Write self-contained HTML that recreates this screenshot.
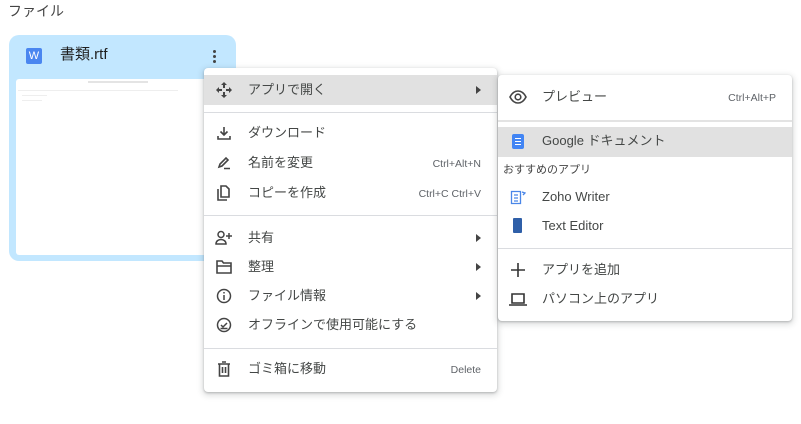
<!DOCTYPE html>
<html><head><meta charset="utf-8"><style>
body{margin:0;width:801px;height:424px;background:#fff;position:relative;overflow:hidden;font-family:"Liberation Sans","Noto Sans CJK JP",sans-serif;color:#3c4043}
.a{position:absolute}
.t{position:absolute;font-size:13px;line-height:16px;white-space:nowrap;color:#444746}
.s{position:absolute;font-size:10.5px;line-height:14px;color:#5f6368;white-space:nowrap;text-align:right}
.menu{position:absolute;background:#fff;border-radius:4px;box-shadow:0 2px 6px 2px rgba(60,64,67,.15),0 1px 2px rgba(60,64,67,.3)}
.sep{position:absolute;left:0;right:0;height:1px;background:#dadce0}
.hl{position:absolute;left:0;right:0;background:#e1e1e1}
svg{position:absolute}
.arr{position:absolute;width:0;height:0;border-top:4px solid transparent;border-bottom:4px solid transparent;border-left:5px solid #444}
</style></head><body>
<div class="t" style="left:8px;top:3px;font-size:14px;color:#444">ファイル</div>
<div class="a" style="left:9px;top:35px;width:227px;height:226px;background:#c2e7ff;border-radius:10px"></div>
<div class="a" style="left:26px;top:48px;width:16px;height:16px;background:#4a86f0;border-radius:2px;color:#fff;font-size:11px;line-height:16px;text-align:center">W</div>
<div class="t" style="left:60px;top:47px;font-size:15px;color:#1f1f1f">書類.rtf</div>
<div class="a" style="left:213px;top:50px;width:3px;height:3px;background:#444;border-radius:50%;box-shadow:0 5px 0 #444,0 10px 0 #444"></div>
<div class="a" style="left:16px;top:79px;width:213px;height:176px;background:#fff;border-radius:3px"></div>
<div class="a" style="left:88px;top:81px;width:60px;height:2px;background:#e4e4e4"></div>
<div class="a" style="left:18px;top:90px;width:160px;height:1px;background:#eee"></div>
<div class="a" style="left:22px;top:95px;width:25px;height:1px;background:#eee"></div>
<div class="a" style="left:22px;top:100px;width:20px;height:1px;background:#eee"></div>

<div class="menu" style="left:204px;top:68px;width:293px;height:324px">
 <div class="hl" style="top:7px;height:30px"></div>
 <div class="sep" style="top:44px"></div>
 <div class="sep" style="top:147px"></div>
 <div class="sep" style="top:280px"></div>
</div>
<svg style="left:216px;top:82px" width="16" height="16" viewBox="0 0 16 16" fill="#444"><path d="M8 0l3 3H9v3H7V3H5zM8 16l-3-3h2v-3h2v3h2zM0 8l3-3v2h3v2H3v2zM16 8l-3 3V9h-3V7h3V5z"/></svg>
<div class="t" style="left:248px;top:82px">アプリで開く</div><div class="arr" style="left:476px;top:86px"></div>
<svg style="left:217px;top:126px" width="14" height="14" viewBox="0 0 14 14" fill="none" stroke="#444" stroke-width="1.6"><path d="M7 1v8M3.5 5.5L7 9l3.5-3.5M1 10v3h12v-3"/></svg>
<div class="t" style="left:248px;top:125px">ダウンロード</div>
<svg style="left:217px;top:156px" width="14" height="14" viewBox="0 0 14 14" fill="none" stroke="#444" stroke-width="1.6"><path d="M2 11l1-3 6-6 2 2-6 6zM7 12.5h6"/></svg>
<div class="t" style="left:248px;top:155px">名前を変更</div><div class="s" style="right:320px;top:157px">Ctrl+Alt+N</div>
<svg style="left:216px;top:185px" width="16" height="16" viewBox="0 0 16 16" fill="none" stroke="#444" stroke-width="1.6"><path d="M2 4v11h9M5 1h5l3 3v8H5z"/></svg>
<div class="t" style="left:248px;top:185px">コピーを作成</div><div class="s" style="right:320px;top:187px">Ctrl+C Ctrl+V</div>
<svg style="left:215px;top:230px" width="18" height="16" viewBox="0 0 18 16" fill="none" stroke="#444" stroke-width="1.5"><circle cx="6" cy="4.5" r="3"/><path d="M1 14c0-3 2.5-4.5 5-4.5s5 1.5 5 4.5zM14 3v6M11 6h6"/></svg>
<div class="t" style="left:248px;top:230px">共有</div><div class="arr" style="left:476px;top:234px"></div>
<svg style="left:216px;top:260px" width="16" height="14" viewBox="0 0 16 14" fill="none" stroke="#444" stroke-width="1.6"><path d="M1 1h5l1.5 2H15v10H1zM1 6h14"/></svg>
<div class="t" style="left:248px;top:259px">整理</div><div class="arr" style="left:476px;top:263px"></div>
<svg style="left:216px;top:288px" width="16" height="16" viewBox="0 0 16 16" fill="none" stroke="#444" stroke-width="1.5"><circle cx="8" cy="8" r="6.5"/><path d="M8 7v5M8 4v1.5"/></svg>
<div class="t" style="left:248px;top:288px">ファイル情報</div><div class="arr" style="left:476px;top:292px"></div>
<svg style="left:216px;top:317px" width="16" height="16" viewBox="0 0 16 16" fill="none" stroke="#444" stroke-width="1.5"><circle cx="8" cy="8" r="6.5"/><path d="M5 8l2 2 4-4M4.5 11.5h7"/></svg>
<div class="t" style="left:248px;top:317px">オフラインで使用可能にする</div>
<svg style="left:217px;top:361px" width="14" height="16" viewBox="0 0 14 16" fill="none" stroke="#444" stroke-width="1.6"><path d="M1 3h12M5 1h4M2.5 3v12h9V3M5.5 6v6M8.5 6v6"/></svg>
<div class="t" style="left:248px;top:361px">ゴミ箱に移動</div><div class="s" style="right:320px;top:363px">Delete</div>

<div class="menu" style="left:498px;top:75px;width:294px;height:246px">
 <div class="sep" style="top:45px;background:#e3e3e3;height:2px"></div>
 <div class="hl" style="top:52px;height:30px"></div>
 <div class="sep" style="top:173px"></div>
</div>
<svg style="left:509px;top:90px" width="18" height="14" viewBox="0 0 18 14" fill="none" stroke="#444" stroke-width="1.6"><path d="M1 7c2-4 5-6 8-6s6 2 8 6c-2 4-5 6-8 6S3 11 1 7z"/><circle cx="9" cy="7" r="2.8"/></svg>
<div class="t" style="left:542px;top:89px">プレビュー</div><div class="s" style="right:25px;top:91px">Ctrl+Alt+P</div>
<div class="a" style="left:512px;top:134px;width:12px;height:15px;background:#4285f4;border-radius:2px"></div>
<div class="a" style="left:515px;top:138px;width:6px;height:1px;background:#fff;box-shadow:0 3px 0 #fff,0 6px 0 #fff"></div>
<div class="t" style="left:542px;top:133px">Google ドキュメント</div>
<div class="t" style="left:503px;top:162px;font-size:11px;color:#444">おすすめのアプリ</div>
<svg style="left:510px;top:189px" width="16" height="16" viewBox="0 0 16 16" fill="none" stroke="#4a86e8" stroke-width="1.3"><path d="M1.5 2.5h9v12h-9zM4 6h4M4 9h4M4 12h4M12 3l3 1-2 2"/></svg>
<div class="t" style="left:542px;top:189px">Zoho Writer</div>
<div class="a" style="left:513px;top:218px;width:9px;height:15px;background:#2f5fa8;border-radius:1px"></div>
<div class="t" style="left:542px;top:218px">Text Editor</div>
<svg style="left:511px;top:263px" width="14" height="14" viewBox="0 0 14 14" stroke="#333" stroke-width="1.6"><path d="M7 0v14M0 7h14"/></svg>
<div class="t" style="left:542px;top:262px">アプリを追加</div>
<svg style="left:509px;top:293px" width="18" height="13" viewBox="0 0 18 13" fill="none" stroke="#333" stroke-width="1.6"><path d="M3 1h12v9H3zM0 12h18"/></svg>
<div class="t" style="left:542px;top:291px">パソコン上のアプリ</div>
</body></html>
